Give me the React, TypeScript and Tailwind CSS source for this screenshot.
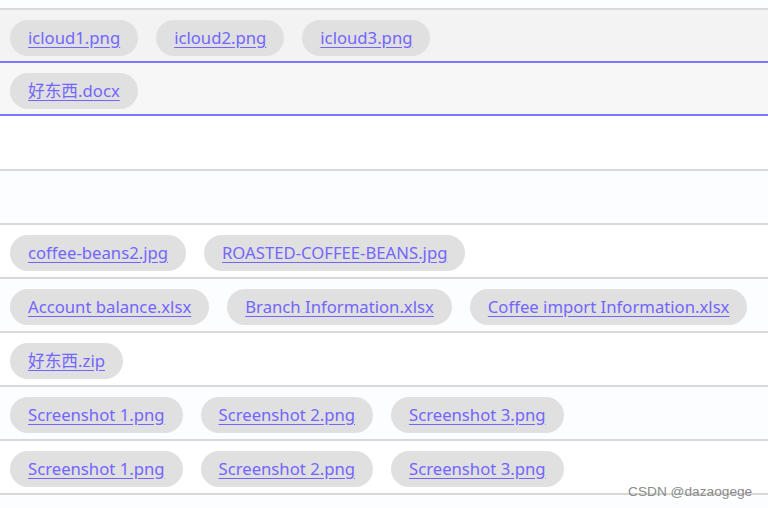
import React from "react";

const font = { fontFamily: '"Noto Sans", "Noto Sans CJK SC", sans-serif' };

function Pill({ name }: { name: string }) {
  return (
    <span className="flex h-[36px] items-center rounded-full bg-[#e0e0e0] px-[18px]">
      <a href="#" className="text-[16.7px] leading-none text-[#7366ff] underline underline-offset-[3px]">
        {name}
      </a>
    </span>
  );
}

function Row({ files, bg }: { files: string[]; bg: string }) {
  return (
    <div className={`flex h-[54px] flex-wrap items-start gap-[18px] border-b-2 border-[#d9d9d9] pl-[10px] pt-[10px] ${bg}`}>
      {files.map((f, i) => (
        <Pill key={i} name={f} />
      ))}
    </div>
  );
}

export default function App() {
  return (
    <div className="relative h-[508px] w-[768px] overflow-hidden bg-[#fcfdff]" style={font}>
      <div className="h-[10px] border-b-2 border-[#d9d9d9] bg-[#fcfdff]" />
      <div className="flex h-[53px] flex-wrap items-start gap-[18px] border-b-2 border-[#7b78ff] bg-[#f3f3f3] pl-[10px] pt-[10px]">
        <Pill name="icloud1.png" />
        <Pill name="icloud2.png" />
        <Pill name="icloud3.png" />
      </div>
      <div className="flex h-[53px] flex-wrap items-start gap-[18px] border-b-2 border-[#7b78ff] bg-[#f7f7f7] pl-[10px] pt-[10px]">
        <Pill name="好东西.docx" />
      </div>
      <div className="h-[55px] border-b-2 border-[#d9d9d9] bg-white" />
      <div className="h-[54px] border-b-2 border-[#d9d9d9] bg-[#fcfdff]" />
      <Row bg="bg-white" files={["coffee-beans2.jpg", "ROASTED-COFFEE-BEANS.jpg"]} />
      <Row bg="bg-[#fcfdff]" files={["Account balance.xlsx", "Branch Information.xlsx", "Coffee import Information.xlsx"]} />
      <Row bg="bg-white" files={["好东西.zip"]} />
      <Row bg="bg-[#fcfdff]" files={["Screenshot 1.png", "Screenshot 2.png", "Screenshot 3.png"]} />
      <Row bg="bg-white" files={["Screenshot 1.png", "Screenshot 2.png", "Screenshot 3.png"]} />
      <div className="h-[20px] bg-[#fcfdff]" />
      <span
        className="absolute left-[628px] top-[482px] text-[13.7px] text-[#8a8a8a]"
        style={{ fontFamily: '"Liberation Sans", sans-serif' }}
      >
        CSDN @dazaogege
      </span>
    </div>
  );
}
